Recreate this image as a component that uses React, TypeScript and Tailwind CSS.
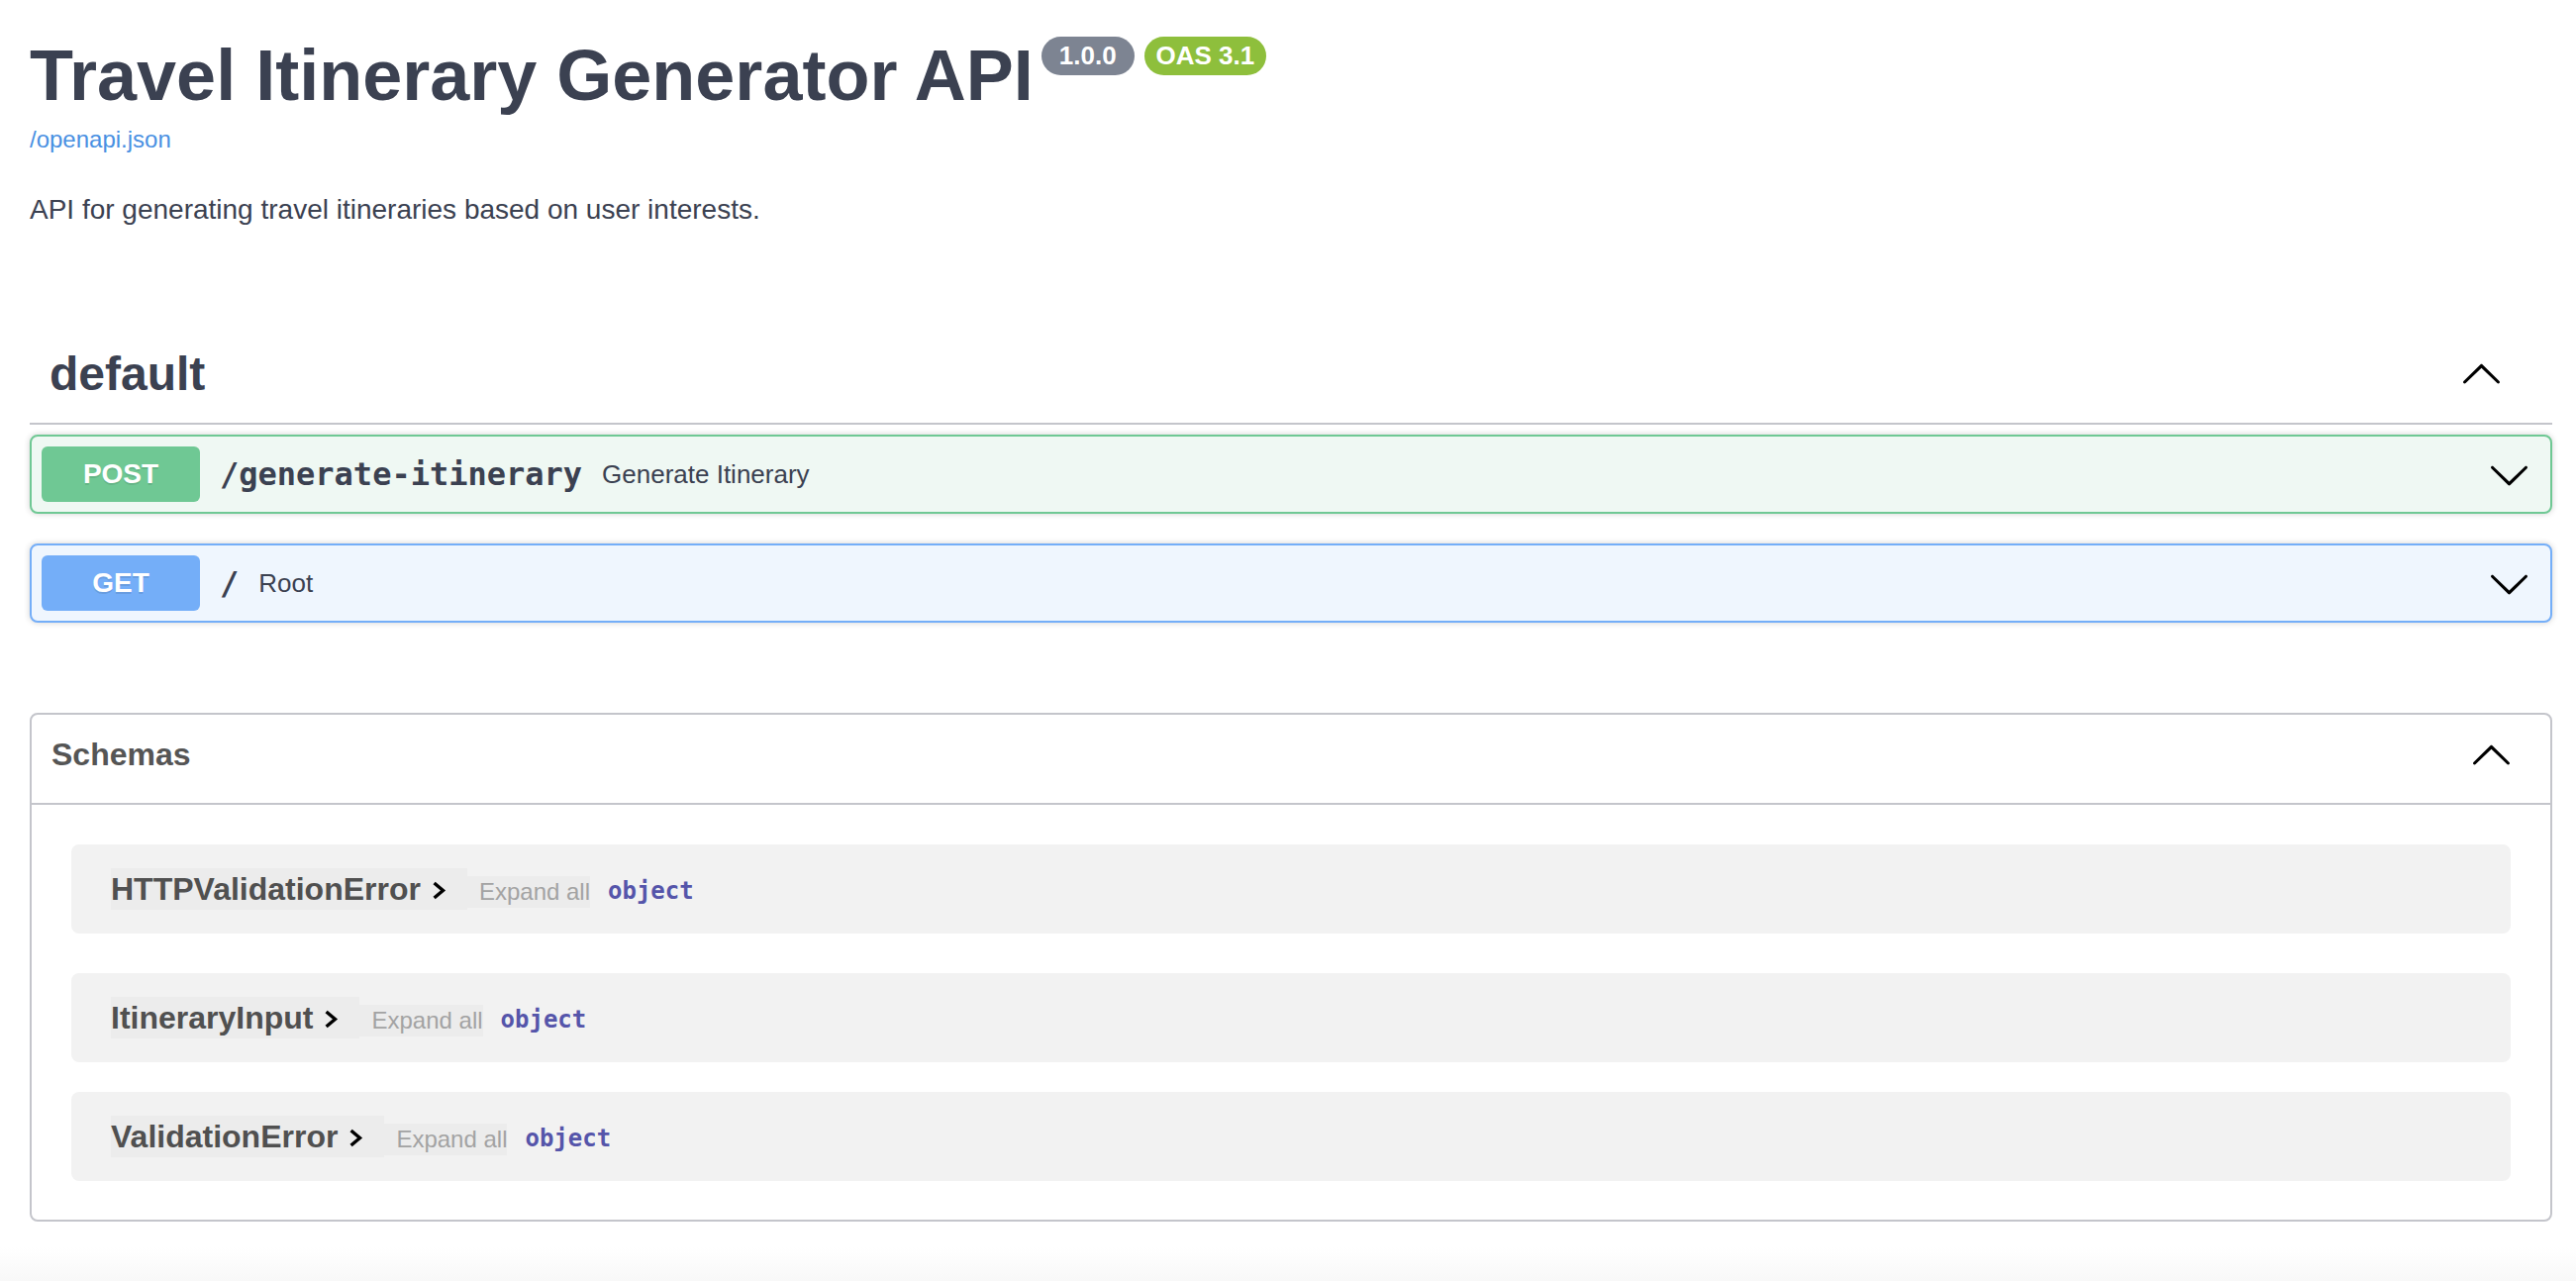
import React from "react";

const ArrowDown = () => (
  <svg width="43" height="43" viewBox="0 0 20 20" aria-hidden="true">
    <path
      fill="#000"
      d="M17.418 6.109c.272-.268.709-.268.979 0s.271.701 0 .969l-7.908 7.83c-.27.268-.707.268-.979 0l-7.908-7.83c-.27-.268-.27-.701 0-.969.271-.268.709-.268.979 0L10 13.25l7.418-7.141z"
    />
  </svg>
);

const ArrowUp = () => (
  <svg width="43" height="43" viewBox="0 0 20 20" aria-hidden="true">
    <path
      fill="#000"
      d="M17.418 14.908c.272.268.709.268.979 0s.271-.701 0-.969l-7.908-7.83c-.27-.268-.707-.268-.979 0l-7.908 7.83c-.27.268-.27.701 0 .969.271.268.709.268.979 0L10 7.767l7.418 7.141z"
    />
  </svg>
);

const ChevronRight = () => (
  <svg width="15" height="19" viewBox="0 0 15 19" className="ml-[11px] mt-[3px]" aria-hidden="true">
    <path d="M2.6 2 L11.5 9.5 L2.6 17" fill="none" stroke="#000" strokeWidth="3.4" />
  </svg>
);

function Model({ name, className }: { name: string; className?: string }) {
  return (
    <div className={"h-[90px] rounded-[8px] bg-[#f2f2f2] flex items-center pl-[40px] " + (className ?? "")}>
      <span className="flex items-center h-[42px] bg-[#ececec] pr-[21px]">
        <span className="text-[32px] leading-[42px] font-bold text-[#505050]">{name}</span>
        <ChevronRight />
      </span>
      <span className="mt-[6px] h-[32px] flex items-center bg-[#ececec] pl-[12px] text-[24px] text-[#a3a3a3]">
        Expand all
      </span>
      <span className="ml-[18px] mt-[4px] font-['DejaVu_Sans_Mono',monospace] font-bold text-[24px] text-[#55a]">
        object
      </span>
    </div>
  );
}

export default function App() {
  return (
    <div className="min-h-[1294px] bg-white font-['Liberation_Sans',Arial,sans-serif] text-[#3b4151]">
      <div className="pl-[30px] pr-[24px]">
        {/* Info */}
        <div className="pt-[40px] flex items-start">
          <h1 className="text-[72px] leading-[72px] font-bold text-[#3b4151]">Travel Itinerary Generator API</h1>
          <span className="ml-[8px] -mt-[3px] w-[94px] h-[39px] rounded-full bg-[#7d8492] text-white text-[26px] font-bold flex items-center justify-center">
            1.0.0
          </span>
          <span className="ml-[10px] -mt-[3px] w-[123px] h-[39px] rounded-full bg-[#8ebf3c] text-white text-[26px] font-bold flex items-center justify-center">
            OAS 3.1
          </span>
        </div>
        <a className="block w-fit mt-[15px] text-[24px] leading-[28px] text-[#4990e2]">/openapi.json</a>
        <p className="mt-[40px] text-[28px] leading-[34px] text-[#3b4151]">
          API for generating travel itineraries based on user interests.
        </p>

        {/* default tag */}
        <div className="mt-[96px] flex items-center h-[104px] border-b-2 border-[#c4c5cb] pl-[20px] pr-[50px]">
          <h2 className="flex-1 mt-[4px] text-[48px] leading-[48px] font-bold text-[#3b4151]">default</h2>
          <ArrowUp />
        </div>

        {/* POST */}
        <div className="mt-[10px] rounded-[8px] border-2 border-[#6fc894] bg-[#eff8f3] shadow-[0_0_6px_rgba(0,0,0,0.19)]">
          <div className="flex items-center p-[10px] pr-[20px]">
            <span className="w-[160px] h-[56px] rounded-[6px] bg-[#6fc894] text-white text-[28px] font-bold flex items-center justify-center [text-shadow:0_2px_0_rgba(0,0,0,0.1)]">
              POST
            </span>
            <span className="px-[20px] font-['DejaVu_Sans_Mono',monospace] font-bold text-[32px] text-[#3b4151]">
              /generate-itinerary
            </span>
            <span className="flex-1 text-[26px] text-[#3b4151]">Generate Itinerary</span>
            <ArrowDown />
          </div>
        </div>

        {/* GET */}
        <div className="mt-[30px] rounded-[8px] border-2 border-[#74aef8] bg-[#eff6fe] shadow-[0_0_6px_rgba(0,0,0,0.19)]">
          <div className="flex items-center p-[10px] pr-[20px]">
            <span className="w-[160px] h-[56px] rounded-[6px] bg-[#74aef8] text-white text-[28px] font-bold flex items-center justify-center [text-shadow:0_2px_0_rgba(0,0,0,0.1)]">
              GET
            </span>
            <span className="px-[20px] font-['DejaVu_Sans_Mono',monospace] font-bold text-[32px] text-[#3b4151]">/</span>
            <span className="flex-1 text-[26px] text-[#3b4151]">Root</span>
            <ArrowDown />
          </div>
        </div>

        {/* Schemas */}
        <section className="mt-[91px] rounded-[8px] border-2 border-[#c4c5cb]">
          <div className="h-[91px] border-b-2 border-[#c4c5cb] pb-[10px] pl-[20px] pr-[38px] flex items-center">
            <h4 className="flex-1 text-[32px] font-bold text-[#555555]">Schemas</h4>
            <ArrowUp />
          </div>
          <div className="px-[40px] pt-[40px] pb-[39px]">
            <Model name="HTTPValidationError" />
            <Model name="ItineraryInput" className="mt-[40px]" />
            <Model name="ValidationError" className="mt-[30px]" />
          </div>
        </section>

        <div className="mt-[26px] h-[34px] -ml-[30px] -mr-[24px] bg-linear-to-b from-white to-[#f8f8f8]" />
      </div>
    </div>
  );
}
